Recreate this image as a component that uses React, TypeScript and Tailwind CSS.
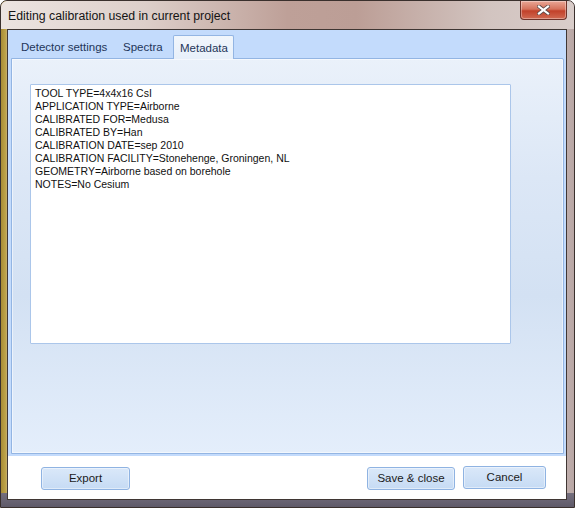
import React from "react";

const METADATA = [
  "TOOL TYPE=4x4x16 CsI",
  "APPLICATION TYPE=Airborne",
  "CALIBRATED FOR=Medusa",
  "CALIBRATED BY=Han",
  "CALIBRATION DATE=sep 2010",
  "CALIBRATION FACILITY=Stonehenge, Groningen, NL",
  "GEOMETRY=Airborne based on borehole",
  "NOTES=No Cesium",
];

const ui = { fontFamily: '"Liberation Sans", Arial, sans-serif' };

function CloseButton() {
  return (
    <div className="absolute top-0 right-[7px] h-[19px] w-[47px] rounded-b-[4px] border border-t-0 border-[#6e332a] bg-[linear-gradient(to_bottom,#e9a796_0%,#d5735c_45%,#c2412a_55%,#d16a52_100%)] flex items-center justify-center shadow-[inset_0_0_0_1px_rgba(255,255,255,0.35)]">
      <svg width="13" height="10" viewBox="0 0 13 10">
        <path
          d="M2 1.5 L11 8.5 M11 1.5 L2 8.5"
          stroke="#5a4a48"
          strokeWidth="3.8"
          strokeLinecap="square"
        />
        <path
          d="M2 1.5 L11 8.5 M11 1.5 L2 8.5"
          stroke="#ffffff"
          strokeWidth="2.2"
          strokeLinecap="square"
        />
      </svg>
    </div>
  );
}

function DialogButton({
  label,
  width,
  className = "",
}: {
  label: string;
  width: string;
  className?: string;
}) {
  return (
    <button
      type="button"
      className={`${width} h-[23px] rounded-[3px] border border-[#8fb3e2] bg-[linear-gradient(to_bottom,#dae8f9,#c6dbf4)] text-[11.5px] text-[#1b1b1b] shadow-[inset_0_0_0_1px_rgba(255,255,255,0.45)] ${className}`}
      style={ui}
    >
      {label}
    </button>
  );
}

export default function App() {
  return (
    <div className="w-[575px] h-[508px] bg-white">
      <div className="relative flex h-[508px] w-[575px] flex-col overflow-hidden rounded-t-[7px] border border-[#3a302d] bg-[linear-gradient(to_right,#a88c36_0px,#c0a64c_5px,#cbbcb8_7px,#cabbb8_97%,#b8a6a4_100%)]">
        {/* title bar */}
        <div className="relative h-[28px] shrink-0 bg-[linear-gradient(to_right,#ece4e1_0%,#ddcfca_25%,#bea098_50%,#bc9e96_62%,#d2c4c0_85%,#d9cdca_100%)]">
          <div
            className="absolute left-[7px] top-[8px] text-[12.3px] leading-[15px] text-[#141414]"
            style={ui}
          >
            Editing calibration used in current project
          </div>
          <CloseButton />
        </div>

        {/* client area */}
        <div className="flex flex-1 flex-col pl-[6px] pr-[7px] pb-[7px] bg-[linear-gradient(to_bottom,transparent_0%,transparent_97%,#756f7e_97%,#5f5a69_100%)]">
          <div className="flex flex-1 flex-col border border-[#3f3633] bg-white">
            {/* tab control */}
            <div className="flex flex-col bg-[#c3dbfc] pl-[3px] pr-[2px] pb-[2px]">
              <div className="relative z-10 flex h-[28px] items-end pl-[2px]">
                <div
                  className="h-[22px] w-[104px] pl-[8px] pt-[3px] text-[11.5px] text-[#1e3559]"
                  style={ui}
                >
                  Detector settings
                </div>
                <div
                  className="h-[22px] w-[56px] pl-[6px] pt-[3px] text-[11.5px] text-[#1e3559]"
                  style={ui}
                >
                  Spectra
                </div>
                <div
                  className="-mb-px h-[24px] w-[61px] rounded-t-[2px] border border-b-0 border-[#93b5e3] bg-[linear-gradient(to_bottom,#f1f6fc,#e8f0fa)] pl-[6px] pt-[4px] text-[11.5px] text-[#1e3559]"
                  style={ui}
                >
                  Metadata
                </div>
              </div>
              <div className="h-[396px] rounded-tr-[2px] border border-[#93b5e3] bg-[linear-gradient(to_bottom,#eaf1fa_0%,#dce7f6_30%,#d3e1f3_60%,#e4eefb_100%)] pl-[18px] pt-[25px] shadow-[inset_0_0_0_1px_rgba(255,255,255,0.5)]">
                <div
                  className="h-[260px] w-[481px] rounded-[1px] border border-[#abc6ea] bg-white pl-[4px] pt-[2px] text-[10.5px] leading-[13px] text-[#111]"
                  style={ui}
                >
                  {METADATA.map((line) => (
                    <div key={line}>{line}</div>
                  ))}
                </div>
              </div>
            </div>

            {/* button strip */}
            <div className="flex flex-1 items-start pt-[11px] pl-[33px] pr-[20px]">
              <DialogButton label="Export" width="w-[89px]" />
              <div className="flex-1" />
              <DialogButton label="Save & close" width="w-[88px]" />
              <DialogButton
                label="Cancel"
                width="w-[83px]"
                className="ml-[8px] -mt-px"
              />
            </div>
          </div>
        </div>
      </div>
    </div>
  );
}
